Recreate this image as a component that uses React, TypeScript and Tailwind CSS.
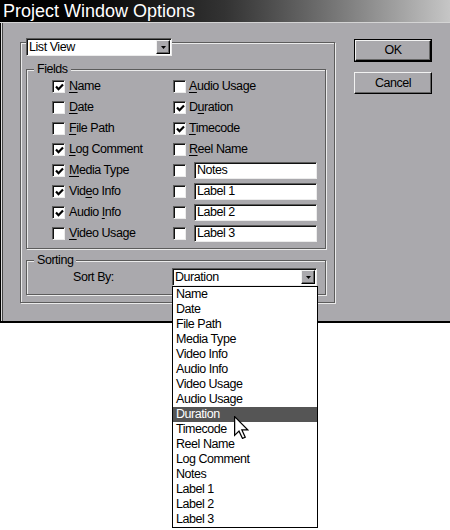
import React from "react";

type Field = { label: string; key: number; checked: boolean };

const leftFields: Field[] = [
  { label: "Name", key: 0, checked: true },
  { label: "Date", key: 0, checked: false },
  { label: "File Path", key: 0, checked: false },
  { label: "Log Comment", key: 0, checked: true },
  { label: "Media Type", key: 0, checked: true },
  { label: "Video Info", key: 3, checked: true },
  { label: "Audio Info", key: 6, checked: true },
  { label: "Video Usage", key: 0, checked: false },
];

const rightFields: (Field | string)[] = [
  { label: "Audio Usage", key: 0, checked: false },
  { label: "Duration", key: 1, checked: true },
  { label: "Timecode", key: 0, checked: true },
  { label: "Reel Name", key: 0, checked: false },
  "Notes",
  "Label 1",
  "Label 2",
  "Label 3",
];

const sortOptions = [
  "Name",
  "Date",
  "File Path",
  "Media Type",
  "Video Info",
  "Audio Info",
  "Video Usage",
  "Audio Usage",
  "Duration",
  "Timecode",
  "Reel Name",
  "Log Comment",
  "Notes",
  "Label 1",
  "Label 2",
  "Label 3",
];

function Check({ checked }: { checked: boolean }) {
  return (
    <span className="flex h-[13px] w-[13px] shrink-0 items-center justify-center border border-t-[#5c5c5c] border-l-[#5c5c5c] border-r-[#ececec] border-b-[#ececec] bg-white shadow-[inset_1px_1px_0_#111]">
      {checked && (
        <svg width="9" height="9" viewBox="0 0 9 9" className="ml-[1px] mt-[1px]">
          <path d="M1 3.5 L3.5 6.2 L8 1.5" fill="none" stroke="#000" strokeWidth="2.2" />
        </svg>
      )}
    </span>
  );
}

function Label({ text, at }: { text: string; at: number }) {
  return (
    <span className="whitespace-pre">
      {text.slice(0, at)}
      <span className="underline underline-offset-[2px]">{text[at]}</span>
      {text.slice(at + 1)}
    </span>
  );
}

function DropButton() {
  return (
    <span className="flex h-[14px] w-[14px] items-center justify-center border border-t-[#f2f2f2] border-l-[#f2f2f2] border-r-black border-b-black bg-[#aaa9ad] shadow-[inset_-1px_-1px_0_#666]">
      <svg width="5" height="3" viewBox="0 0 5 3">
        <path d="M0 0 H5 L2.5 3 Z" fill="#000" />
      </svg>
    </span>
  );
}

function GroupBox({
  title,
  className,
  children,
}: {
  title: string;
  className: string;
  children: React.ReactNode;
}) {
  return (
    <div
      className={`flex flex-col border border-[#5c5c5c] shadow-[inset_1px_1px_0_#ebebeb,1px_1px_0_#ebebeb] ${className}`}
    >
      <span className="-mt-[8px] ml-[7px] h-[14px] self-start bg-[#aaa9ad] px-[3px] leading-[14px]">
        {title}
      </span>
      {children}
    </div>
  );
}

function Button({ label, isDefault }: { label: string; isDefault?: boolean }) {
  const face = (
    <div className="flex h-full w-full items-center justify-center border border-t-[#f2f2f2] border-l-[#f2f2f2] border-r-black border-b-black shadow-[inset_-1px_-1px_0_#666]">
      {label}
    </div>
  );
  if (isDefault) {
    return <div className="h-[23px] w-[78px] border border-black">{face}</div>;
  }
  return <div className="h-[22px] w-[78px]">{face}</div>;
}

export default function App() {
  return (
    <div className="relative h-[530px] w-[450px] overflow-hidden bg-white font-['Liberation_Sans',Arial,sans-serif] text-[12.5px] tracking-[-0.45px] text-black">
      <div className="h-[23px] border-b border-[#d4d4d4] bg-linear-to-r from-black via-[#333] to-[#c6c6c6] pl-[3px] text-[18px] leading-[22px] tracking-normal text-white">
        Project Window Options
      </div>

      <div className="flex h-[300px] items-start border-b-2 border-black bg-[#aaa9ad] pt-[16px] shadow-[inset_1px_0_0_#000,inset_2px_0_0_#dcdcdc,inset_3px_0_0_#444]">
        <div className="ml-[20px] mt-[3px] flex w-[315px] flex-col border border-[#5c5c5c] pb-[7px] shadow-[inset_1px_1px_0_#ebebeb,1px_1px_0_#ebebeb]">
          <div className="-mt-[5px] ml-[5px] flex h-[18px] w-[146px] items-center border border-t-[#5c5c5c] border-l-[#5c5c5c] border-r-[#ececec] border-b-[#ececec] bg-white pr-[1px] shadow-[inset_1px_1px_0_#111]">
            <span className="pl-[2px]">List View</span>
            <span className="ml-auto">
              <DropButton />
            </span>
          </div>

          <GroupBox title="Fields" className="ml-[5px] mt-[13px] w-[300px] pb-[4px]">
            <div className="flex flex-col pl-[25px]">
              {leftFields.map((f, i) => {
                const r = rightFields[i];
                return (
                  <div key={f.label} className="flex h-[21px] items-center">
                    <div className="flex w-[121px] items-center">
                      <Check checked={f.checked} />
                      <span className="ml-[4px]">
                        <Label text={f.label} at={f.key} />
                      </span>
                    </div>
                    <div className="flex items-center">
                      {typeof r === "string" ? (
                        <>
                          <Check checked={false} />
                          <div className="ml-[8px] flex h-[17px] w-[123px] items-center border border-t-[#5c5c5c] border-l-[#5c5c5c] border-r-[#ececec] border-b-[#ececec] bg-white pl-[2px] shadow-[inset_1px_1px_0_#111]">
                            {r}
                          </div>
                        </>
                      ) : (
                        <>
                          <Check checked={r.checked} />
                          <span className="ml-[3px]">
                            <Label text={r.label} at={r.key} />
                          </span>
                        </>
                      )}
                    </div>
                  </div>
                );
              })}
            </div>
          </GroupBox>

          <GroupBox title="Sorting" className="ml-[5px] mt-[11px] w-[300px] pb-[8px]">
            <div className="mt-[1px] flex h-[18px] items-center pl-[46px]">
              <span className="w-[99px]">Sort By:</span>
              <div className="relative flex h-[18px] w-[145px] items-center border border-t-[#5c5c5c] border-l-[#5c5c5c] border-r-[#ececec] border-b-[#ececec] bg-white pr-[1px] shadow-[inset_1px_1px_0_#111]">
                <span className="pl-[2px]">Duration</span>
                <span className="ml-auto">
                  <DropButton />
                </span>

                <div className="absolute left-[-1px] top-full z-10 mt-[1px] flex h-[242px] w-[146px] flex-col border border-black bg-white">
                  {sortOptions.map((o) => (
                    <div
                      key={o}
                      className={`h-[15px] pl-[3px] leading-[15px] ${
                        o === "Duration" ? "bg-[#555] text-white" : ""
                      }`}
                    >
                      {o}
                    </div>
                  ))}
                  <svg
                    width="15"
                    height="23"
                    viewBox="0 0 12 19"
                    className="absolute left-[61px] top-[129px]"
                    preserveAspectRatio="none"
                  >
                    <path
                      d="M0.5 0.5 L0.5 16 L4 12.5 L6.8 18.5 L9 17.5 L6.3 11.5 L11 11.5 Z"
                      fill="#fff"
                      stroke="#000"
                      strokeWidth="1"
                    />
                  </svg>
                </div>
              </div>
            </div>
          </GroupBox>
        </div>

        <div className="ml-[19px] flex flex-col">
          <Button label="OK" isDefault />
          <div className="mt-[10px]">
            <Button label="Cancel" />
          </div>
        </div>
      </div>
    </div>
  );
}
